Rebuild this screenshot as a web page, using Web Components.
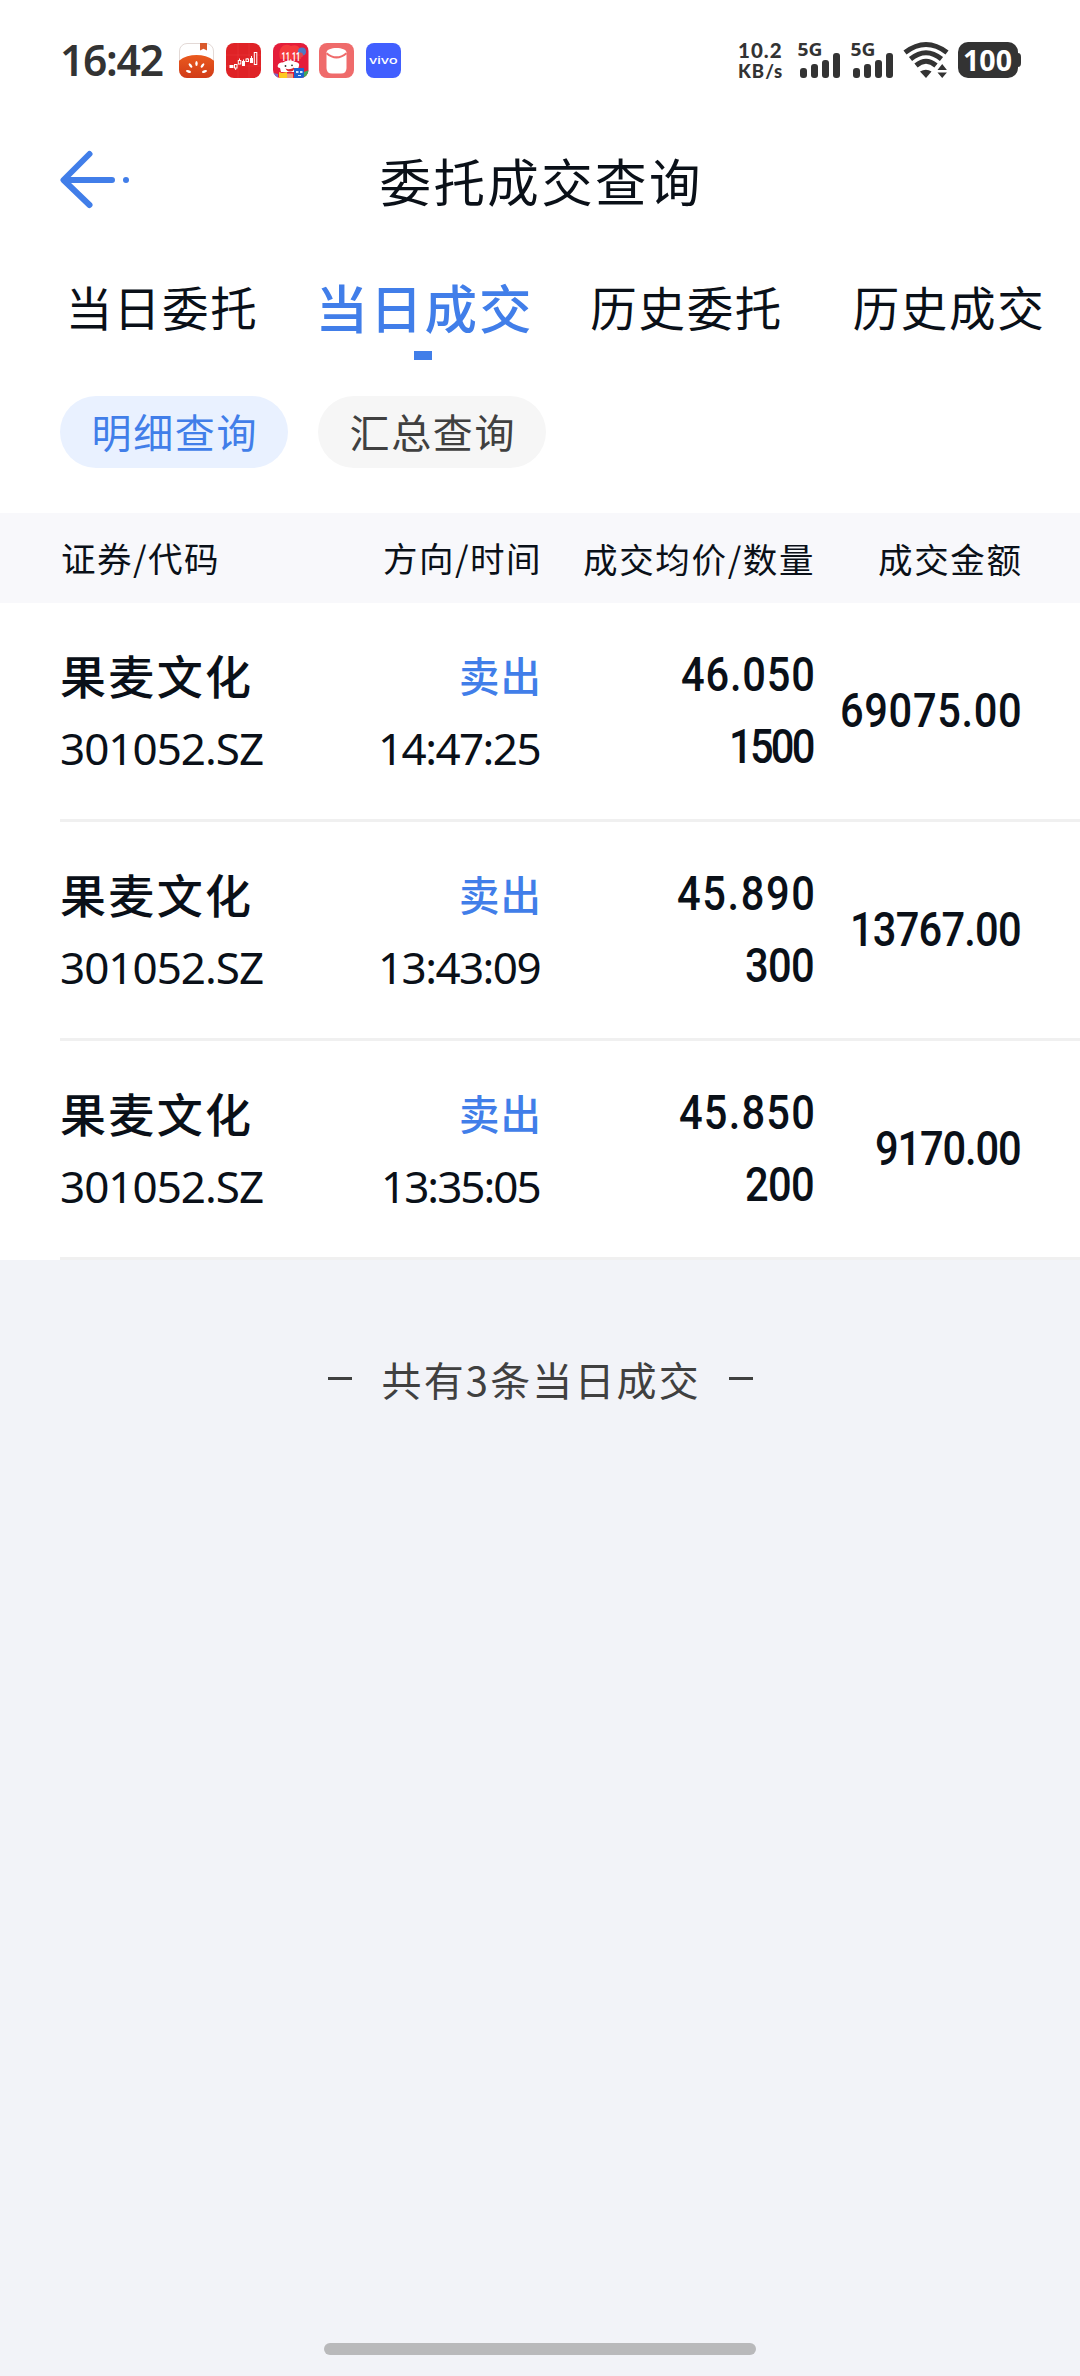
<!DOCTYPE html>
<html lang="zh-CN">
<head>
<meta charset="utf-8">
<title>委托成交查询</title>
<style>
html,body{margin:0;padding:0;background:#f2f3f8}
body{font-family:"Noto Sans CJK SC","Noto Sans",sans-serif;color:#0a1018}
</style>
</head>
<body>
<trade-page></trade-page>

<script>
const make = (css, html) => {
  const t = document.createElement('template');
  t.innerHTML = `<style>${css}</style>${html}`;
  return t;
};
class Base extends HTMLElement {
  constructor() {
    super();
    this.attachShadow({ mode: 'open' });
  }
  paint(css, html) {
    this.shadowRoot.replaceChildren(make(css, html).content.cloneNode(true));
  }
}

/* One line of text, tracked so that it spans the width given in "w". */
class FitText extends Base {
  connectedCallback() {
    const a = n => this.getAttribute(n);
    const fam = {
      cjk: '"Noto Sans CJK SC",sans-serif',
      ui: '"Noto Sans","Noto Sans CJK SC",sans-serif',
      lato: 'Lato,"Noto Sans",sans-serif',
      din: 'Roboto,"Noto Sans",sans-serif'
    }[a('face') || 'cjk'];
    const sx = +(a('sx') || 1);
    this.paint(`
      :host{display:block;width:${a('w')}px;height:${a('lh')}px;line-height:${a('lh')}px;flex:none;white-space:nowrap;
        font-family:${fam};font-size:${a('size')}px;font-weight:${a('weight') || 400}}
      span{display:inline-block;transform-origin:0 50%;transform:translate(${a('dx') || 0}px,${a('dy') || 0}px) scaleX(${sx})}`,
      `<span>${a('text')}</span>`);
    const s = this.shadowRoot.querySelector('span');
    const n = [...a('text')].length;
    const ls = (+a('w') / sx - s.offsetWidth) / Math.max(1, n - 1);
    s.style.letterSpacing = ls.toFixed(3) + 'px';
  }
}
customElements.define('fit-text', FitText);

class SignalBars extends Base {
  connectedCallback() {
    this.paint(`:host{display:block;width:43px;height:36px}svg{display:block;overflow:visible}
      text{font:700 18.5px "Noto Sans",sans-serif;fill:#333}`,
      `<svg width="43" height="36"><text x="-.5" y="14" textLength="25" lengthAdjust="spacingAndGlyphs">5G</text>
       <g fill="#333"><rect x="2" y="26" width="7" height="10" rx="3"/><rect x="13" y="22" width="7" height="14" rx="3"/>
       <rect x="24" y="18" width="7" height="18" rx="3"/><rect x="35" y="11" width="7" height="25" rx="3"/></g></svg>`);
  }
}
customElements.define('signal-bars', SignalBars);

const ICONS = {
  tomato: `<defs><clipPath id="c"><rect width="35" height="35" rx="8"/></clipPath><linearGradient id="g" x1="0" y1="0" x2="0" y2="1"><stop offset="0" stop-color="#ea5a1e"/><stop offset="1" stop-color="#d03a18"/></linearGradient></defs>
    <rect x=".5" y=".5" width="34" height="34" rx="7.500" fill="#fff" stroke="#e3d9d6"/>
    <g clip-path="url(#c)"><path d="M-1 18.500C4 14 11 12 17.500 12S31 14 36 18.500V36H-1Z" fill="url(#g)"/><path d="M21 0h7v7.500l-3.500-1.700L21 7.500Z" fill="#d9592c"/></g>
    <g fill="#fff"><ellipse cx="17.500" cy="20.500" rx="1.200" ry="2.600"/><ellipse cx="11.500" cy="22.500" rx="1.200" ry="2.600" transform="rotate(-38 11.500 22.500)"/><ellipse cx="23.500" cy="22.500" rx="1.200" ry="2.600" transform="rotate(38 23.500 22.500)"/><ellipse cx="9.500" cy="28.500" rx="2.600" ry="1.200" transform="rotate(15 9.500 28.500)"/><ellipse cx="25.500" cy="28.500" rx="2.600" ry="1.200" transform="rotate(-15 25.500 28.500)"/></g>`,
  stock: `<rect width="35" height="35" rx="8" fill="#df2226"/><path d="M0 12H35M0 23H35M12 0V35M23 0V35" stroke="#e9383a" stroke-width=".6"/>
    <g fill="#fff"><rect x="3.500" y="22" width="4" height="3"/><rect x="16" y="18" width="3" height="5"/><rect x="24" y="15" width="3" height="5"/></g>
    <g fill="none" stroke="#fff" stroke-width="1"><rect x="8.500" y="21.500" width="2.500" height="3.500"/><path d="M9.700 25v2M13.500 15.500v2M17.500 16.500v2M21.200 15v1M25.500 13v3"/><rect x="12.300" y="17.500" width="2.500" height="3.500"/><rect x="20" y="16" width="2.500" height="2.500"/><rect x="28.300" y="9.500" width="2.500" height="12"/></g>`,
  sale: `<defs><clipPath id="c"><rect width="35.500" height="35" rx="8"/></clipPath></defs><g clip-path="url(#c)"><rect width="36" height="35" fill="#e41d3a"/>
    <path d="M7 16C4 4 12-1 18 3c7-3 12 3 10 13Z" fill="#f43a3c"/><circle cx="29" cy="8.500" r="4" fill="#4e79c4"/><circle cx="27.500" cy="12" r="2.500" fill="#e0474f"/>
    <path fill="#fff" d="M5 22c1-3 4-2 6-3 3-2 9-2 11 0 2 0 5 1 4 4l-2 6H8l-1-4C5 25 4 23 5 22Z"/>
    <path d="M12.500 25.500c3 1.500 6 .5 8.500-1 1 4.500-6 6-8.500 1Z" fill="#d4252f"/><circle cx="12.500" cy="23" r=".9" fill="#333"/><circle cx="19" cy="22.300" r=".9" fill="#333"/>
    <path d="M6 29l3 1 5-1v6H6Z" fill="#fdc91e"/><path d="M14 30.500h6v4.500h-6Z" fill="#ee9c78"/><rect x="21" y="25" width="10" height="10" fill="#1d62cf"/><path d="M23 28h2.500v2H23ZM27 28h2.500v2H27ZM25 32h3v1h-3Z" fill="#d5e9ff"/><path d="M31 29l5-2v8h-5Z" fill="#43a85b"/><path d="M0 30l5 1v4H0Z" fill="#7a6fc5"/></g>
    <text transform="translate(8.500 18.200) scale(.58 1)" fill="#fff" style="font:700 12.500px Roboto,sans-serif">11.11</text>`,
  jar: `<rect width="35" height="35" rx="8" fill="#ef6b6b"/><path d="M7.500 9.500C7.500 3.500 27.500 3.500 27.500 9.500V25q0 5.500-5.500 5.500H13q-5.500 0-5.500-5.500Z" fill="#fff"/><path d="M7.500 10.200Q17.500 18.500 27.500 10.200" fill="none" stroke="#ef6b6b" stroke-width="2"/>`,
  vivo: `<rect width="35" height="35" rx="8" fill="#415fff"/><text x="3.300" y="21.300" textLength="28.500" lengthAdjust="spacingAndGlyphs" fill="#fff" style="font:500 11px 'Noto Sans',sans-serif">vivo</text>`
};
class AppIcon extends Base {
  connectedCallback() {
    this.paint(`:host{display:block;width:35px;height:35px}svg{display:block;overflow:visible}`,
      `<svg width="35.500" height="35">${ICONS[this.getAttribute('name')]}</svg>`);
  }
}
customElements.define('app-icon', AppIcon);

class StatusBar extends Base {
  connectedCallback() {
    this.paint(`
      :host{display:flex;height:120px;box-sizing:border-box;padding:0 59px 0 60px;justify-content:space-between;color:#333}
      .l,.r{display:flex;height:120px;align-items:center}
      .apps{display:flex;gap:11.750px;margin-left:15px}
      .speed{display:flex;flex-direction:column;align-items:flex-start;margin-right:16px}
      signal-bars+signal-bars{margin-left:10px}
      .wifi{margin:0 9px 0 9px}
      svg{display:block;overflow:visible}
      .bat text{font:700 29px "Noto Sans",sans-serif;fill:#fff}`,
      `<div class="l"><fit-text text="16:42" face="ui" weight="600" size="42.5" w="104" lh="60"></fit-text>
        <div class="apps">${Object.keys(ICONS).map(n => `<app-icon name="${n}"></app-icon>`).join('')}</div></div>
       <div class="r"><div class="speed"><fit-text text="10.2" face="lato" weight="900" size="20.500" w="44" lh="21"></fit-text>
        <fit-text text="KB/s" face="lato" weight="900" size="18.500" w="44" lh="20"></fit-text></div>
        <signal-bars></signal-bars><signal-bars></signal-bars>
        <svg class="wifi" width="46" height="36" fill="none" stroke="#333" stroke-width="5" stroke-linecap="butt">
          <path d="M2 10.500Q23-5.500 44 10.500M7.500 17Q23 4.500 38.500 17M13 23.500Q23 15 33 23.500"/>
          <path d="M17 29.500Q23 26 28.500 29.500L23 36Z" fill="#333" stroke="none"/>
          <path d="M34.500 28l4.700-6 4.700 6ZM34.500 30.500h9.400l-4.700 5.500Z" fill="#333" stroke="none"/></svg>
        <svg class="bat" width="63" height="36"><path d="M60 11q3 0 3 4v6q0 4-3 4Z" fill="#333"/><rect width="60" height="36" rx="10" fill="#333"/><text x="5" y="28.500" textLength="49" lengthAdjust="spacingAndGlyphs">100</text></svg>
       </div>`);
  }
}
customElements.define('status-bar', StatusBar);

class NavBar extends Base {
  connectedCallback() {
    this.paint(`
      :host{display:grid;grid-template-columns:1fr auto 1fr;height:120px;align-items:center;padding:0 60px}
      svg{display:block}`,
      `<svg width="72" height="60" fill="none" stroke="#417ee9" stroke-width="6" stroke-linecap="round" stroke-linejoin="round"><path d="M29.500 4L3.500 30L29.500 55M4 30H52"/><circle cx="66" cy="30" r="3" fill="#417ee9" stroke="none"/></svg>
       <fit-text text="${this.getAttribute('heading')}" size="51.500" w="321" lh="90"></fit-text>`);
  }
}
customElements.define('nav-bar', NavBar);

class TabItem extends Base {
  connectedCallback() {
    const on = this.hasAttribute('active');
    this.paint(`
      :host{display:flex;flex-direction:column;align-items:center;width:262.330px;flex:none;height:120px;color:${on ? '#417ee9' : 'inherit'}}
      i{width:18px;height:9px;background:#417ee9;margin-top:1px}`,
      `<fit-text text="${this.getAttribute('label')}" size="${on ? 52.500 : 46.500}" weight="${on ? 500 : 400}" w="${on ? 216 : 191}" lh="90" dy="1"></fit-text>${on ? '<i></i>' : ''}`);
  }
}
customElements.define('tab-item', TabItem);

class TabStrip extends Base {
  connectedCallback() {
    this.paint(`:host{display:flex;height:130px;padding:20px 0 0 30px;box-sizing:border-box;overflow:hidden}
      ::slotted(*){flex:none}`, `<slot></slot>`);
  }
}
customElements.define('tab-strip', TabStrip);

class PillButton extends Base {
  connectedCallback() {
    const on = this.hasAttribute('active');
    this.paint(`:host{display:flex;width:228px;height:72px;border-radius:36px;align-items:center;justify-content:center;
      background:${on ? '#e9f1ff' : '#f6f6f6'};color:${on ? '#417ee9' : '#404040'}}`,
      `<fit-text text="${this.getAttribute('label')}" size="40" w="165" lh="72" dy="-1"></fit-text>`);
  }
}
customElements.define('pill-button', PillButton);

const GRID = 'display:grid;grid-template-columns:240px 240px 273px 207px;';
class TableHead extends Base {
  connectedCallback() {
    this.paint(`:host{${GRID}padding-left:60px;height:90px;align-items:center;background:#f8f8fb}
      fit-text{justify-self:end}fit-text:first-of-type{justify-self:start}`,
      [['证券/代码', 158], ['方向/时间', 158], ['成交均价/数量', 231], ['成交金额', 143]].map(([t, w], i) =>
        `<fit-text text="${t}" size="34.500" w="${w}" lh="90" dx="1" dy="${i > 1 ? 0 : -1}"></fit-text>`).join(''));
  }
}
customElements.define('table-head', TableHead);

class TradeRow extends Base {
  connectedCallback() {
    const a = n => this.getAttribute(n);
    const num = k => `<fit-text face="din" weight="500" size="49" sx="0.85" lh="72" dx="2" dy="0" text="${a(k)}" w="${a(k + '-w')}"></fit-text>`;
    this.paint(`
      :host{display:block;padding-left:60px;background:#fff}
      .g{${GRID}height:216px;align-items:center;border-bottom:3px solid #f0f0f0}
      .g>div{display:flex;flex-direction:column;align-items:flex-end;height:144px;justify-content:center}
      .g>div:first-child{align-items:flex-start}
      .sell{color:#417ee9}`,
      `<div class="g">
        <div><fit-text text="${a('name')}" weight="500" size="46" w="191" lh="72" dy="-1"></fit-text>
          <fit-text face="ui" text="${a('code')}" size="44" w="204" lh="72" dy="1"></fit-text></div>
        <div><fit-text class="sell" text="${a('side')}" weight="500" size="40.500" w="82" lh="72" dx="1" dy="0"></fit-text>
          <fit-text face="ui" text="${a('time')}" size="44" w="${a('time-w')}" lh="72" dx="2" dy="1"></fit-text></div>
        <div>${num('price')}${num('qty')}</div>
        <div>${num('amount')}</div>
      </div>`);
  }
}
customElements.define('trade-row', TradeRow);

class ListEnd extends Base {
  connectedCallback() {
    this.paint(`:host{display:flex;justify-content:center;align-items:center;gap:30px;height:72px;padding-top:83px;color:#404040}
      i{width:24px;height:3px;background:#404040;margin-top:-2px}`,
      `<i></i><fit-text text="${this.getAttribute('label')}" size="40" w="317" lh="72"></fit-text><i></i>`);
  }
}
customElements.define('list-end', ListEnd);

class TradePage extends Base {
  connectedCallback() {
    const rows = [
      ['14:47:25', 164, '46.050', 134, '1500', 86, '69075.00', 182],
      ['13:43:09', 164, '45.890', 138, '300', 70, '13767.00', 172],
      ['13:35:05', 161, '45.850', 136, '200', 70, '9170.00', 147]
    ];
    this.paint(`
      :host{display:flex;flex-direction:column;width:1080px;height:2376px;background:#f2f3f8;overflow:hidden}
      .top{background:#fff;height:513px}
      .pills{display:flex;gap:30px;padding:26px 60px 0}
      .home{width:432px;height:12px;border-radius:6px;background:#b9b9bb;margin:auto auto 21px}`,
      `<div class="top"><status-bar></status-bar><nav-bar heading="委托成交查询"></nav-bar>
        <tab-strip><tab-item label="当日委托"></tab-item><tab-item label="当日成交" active></tab-item><tab-item label="历史委托"></tab-item><tab-item label="历史成交"></tab-item></tab-strip>
        <div class="pills"><pill-button label="明细查询" active></pill-button><pill-button label="汇总查询"></pill-button></div></div>
      <table-head></table-head>
      ${rows.map(r => `<trade-row name="果麦文化" code="301052.SZ" side="卖出" time="${r[0]}" time-w="${r[1]}" price="${r[2]}" price-w="${r[3]}" qty="${r[4]}" qty-w="${r[5]}" amount="${r[6]}" amount-w="${r[7]}"></trade-row>`).join('')}
      <list-end label="共有3条当日成交"></list-end>
      <div class="home"></div>`);
  }
}
customElements.define('trade-page', TradePage);
</script>
</body>
</html>
